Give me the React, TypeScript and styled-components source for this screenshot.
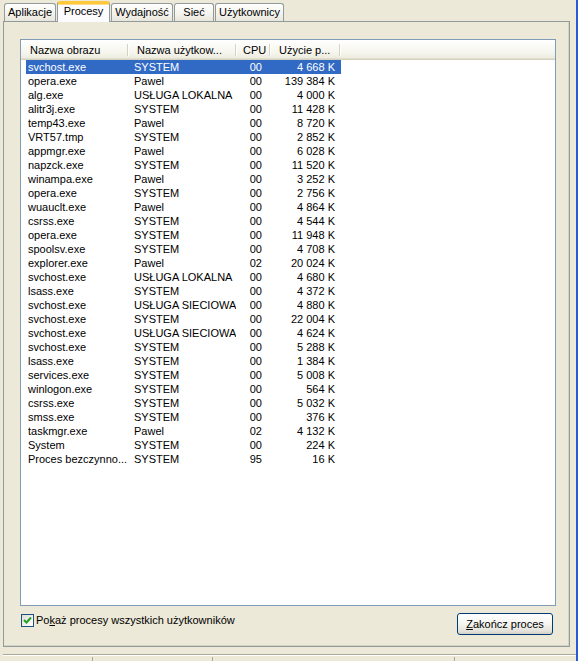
import styled, { createGlobalStyle } from 'styled-components'

const GlobalStyle = createGlobalStyle`
  html, body {
    margin: 0;
    padding: 0;
    background: #ECE9D8;
  }
  body {
    font-family: "Liberation Sans", Arial, sans-serif;
    font-size: 11px;
    color: #000;
  }
`

const Window = styled.div`
  width: 578px;
  height: 661px;
  display: flex;
  background: #ECE9D8;
  overflow: hidden;
`

const Main = styled.div`
  flex: 1;
  display: flex;
  flex-direction: column;
  padding-left: 3px;
`

const Frame = styled.div`
  width: 2px;
  background: #2B5BD4;
`

const TabStrip = styled.div`
  display: flex;
  align-items: flex-end;
  gap: 1px;
  height: 21px;
  padding-left: 1px;
  position: relative;
  z-index: 1;
`

const Tab = styled.div<{ $width: number; $active?: boolean }>`
  box-sizing: border-box;
  width: ${({ $width }) => $width}px;
  height: ${({ $active }) => ($active ? 21 : 18)}px;
  margin-bottom: ${({ $active }) => ($active ? -1 : 0)}px;
  border: 1px solid #919B9C;
  border-bottom: none;
  border-radius: 3px 3px 0 0;
  background: ${({ $active }) =>
    $active ? '#FCFCFE' : 'linear-gradient(#FFFFFF, #F3F2EC 60%, #E8E6DC)'};
  border-top: ${({ $active }) => ($active ? '3px solid #FFC83C' : '1px solid #919B9C')};
  box-shadow: ${({ $active }) => ($active ? 'inset 0 1px 0 #FFDD8A' : 'none')};
  text-align: center;
  line-height: ${({ $active }) => ($active ? 15 : 16)}px;
  white-space: nowrap;
`

const Panel = styled.div`
  box-sizing: border-box;
  width: 567px;
  height: 627px;
  border: 1px solid #919B9C;
  background: #ECE9D8;
  box-shadow: inset -1px -1px 0 #D6D3C6;
  display: flex;
  flex-direction: column;
  padding: 17px 14px 0 16px;
`

const ListView = styled.div`
  box-sizing: border-box;
  width: 536px;
  height: 567px;
  border: 1px solid #7F9DB9;
  background: #FFFFFF;
  overflow: hidden;
`

const Header = styled.div`
  display: flex;
  height: 19px;
  background: linear-gradient(#FFFFFF, #F5F4EC 70%, #EBEADB);
  border-bottom: 1px solid #D6D2C2;
  box-shadow: 0 -1px 0 #E2DECD inset;
`

const HeaderCell = styled.div<{ $width: number; $pad: number }>`
  position: relative;
  box-sizing: border-box;
  width: ${({ $width }) => $width}px;
  padding-left: ${({ $pad }) => $pad}px;
  padding-top: 1px;
  line-height: 18px;
  white-space: nowrap;
  &::after {
    content: '';
    position: absolute;
    right: 0;
    top: 4px;
    bottom: 3px;
    width: 1px;
    background: #D6D2C2;
    box-shadow: 1px 0 0 #FFFFFF;
  }
`

const Rows = styled.div`
  display: flex;
  flex-direction: column;
  padding-left: 5px;
`

const Row = styled.div<{ $selected?: boolean }>`
  display: flex;
  width: 315px;
  height: 14px;
  line-height: 14px;
  background: ${({ $selected }) => ($selected ? '#316AC5' : 'transparent')};
  color: ${({ $selected }) => ($selected ? '#FFFFFF' : '#000000')};
`

const Cell = styled.div<{ $width: number; $right?: boolean; $pad: number }>`
  box-sizing: border-box;
  width: ${({ $width }) => $width}px;
  white-space: nowrap;
  overflow: hidden;
  text-align: ${({ $right }) => ($right ? 'right' : 'left')};
  ${({ $right, $pad }) => ($right ? `padding-right: ${$pad}px;` : `padding-left: ${$pad}px;`)}
`

const BottomRow = styled.div`
  display: flex;
  justify-content: space-between;
  align-items: flex-start;
  margin-top: 7px;
  padding: 0 2px 0 1px;
`

const CheckLabel = styled.label`
  display: flex;
  align-items: center;
  gap: 2px;
  margin-top: 1px;
  line-height: 13px;
`

const CheckBox = styled.span`
  box-sizing: border-box;
  width: 13px;
  height: 13px;
  border: 1px solid #1C5180;
  background: linear-gradient(135deg, #DCDCD7, #FFFFFF);
  display: flex;
  align-items: center;
  justify-content: center;
`

const Button = styled.button`
  box-sizing: border-box;
  width: 96px;
  height: 22px;
  padding: 0;
  border: 1px solid #003C74;
  border-radius: 3px;
  background: linear-gradient(#FFFFFF, #F4F4F0 50%, #E3E2DA 85%, #D6D0C5);
  font-family: "Liberation Sans", Arial, sans-serif;
  font-size: 11px;
  color: #000;
  line-height: 20px;
`

const StatusBar = styled.div`
  display: flex;
  height: 6px;
  margin-top: 7px;
  border-top: 1px solid #ACA899;
  box-shadow: inset 0 1px 0 #FFFFFF;
`

const StatusCell = styled.div<{ $width: number }>`
  width: ${({ $width }) => $width}px;
  border-right: 1px solid #ACA899;
  margin-top: 2px;
`

const tabs = [
  { label: 'Aplikacje', width: 52 },
  { label: 'Procesy', width: 53, active: true },
  { label: 'Wydajność', width: 62 },
  { label: 'Sieć', width: 40 },
  { label: 'Użytkownicy', width: 69 },
]

const columns = [
  { label: 'Nazwa obrazu', width: 107, pad: 9 },
  { label: 'Nazwa użytkow...', width: 108, pad: 9 },
  { label: 'CPU', width: 34, pad: 7 },
  { label: 'Użycie p...', width: 70, pad: 9 },
]

const processes: [string, string, string, string][] = [
  ['svchost.exe', 'SYSTEM', '00', '4 668 K'],
  ['opera.exe', 'Pawel', '00', '139 384 K'],
  ['alg.exe', 'USŁUGA LOKALNA', '00', '4 000 K'],
  ['alitr3j.exe', 'SYSTEM', '00', '11 428 K'],
  ['temp43.exe', 'Pawel', '00', '8 720 K'],
  ['VRT57.tmp', 'SYSTEM', '00', '2 852 K'],
  ['appmgr.exe', 'Pawel', '00', '6 028 K'],
  ['napzck.exe', 'SYSTEM', '00', '11 520 K'],
  ['winampa.exe', 'Pawel', '00', '3 252 K'],
  ['opera.exe', 'SYSTEM', '00', '2 756 K'],
  ['wuauclt.exe', 'Pawel', '00', '4 864 K'],
  ['csrss.exe', 'SYSTEM', '00', '4 544 K'],
  ['opera.exe', 'SYSTEM', '00', '11 948 K'],
  ['spoolsv.exe', 'SYSTEM', '00', '4 708 K'],
  ['explorer.exe', 'Pawel', '02', '20 024 K'],
  ['svchost.exe', 'USŁUGA LOKALNA', '00', '4 680 K'],
  ['lsass.exe', 'SYSTEM', '00', '4 372 K'],
  ['svchost.exe', 'USŁUGA SIECIOWA', '00', '4 880 K'],
  ['svchost.exe', 'SYSTEM', '00', '22 004 K'],
  ['svchost.exe', 'USŁUGA SIECIOWA', '00', '4 624 K'],
  ['svchost.exe', 'SYSTEM', '00', '5 288 K'],
  ['lsass.exe', 'SYSTEM', '00', '1 384 K'],
  ['services.exe', 'SYSTEM', '00', '5 008 K'],
  ['winlogon.exe', 'SYSTEM', '00', '564 K'],
  ['csrss.exe', 'SYSTEM', '00', '5 032 K'],
  ['smss.exe', 'SYSTEM', '00', '376 K'],
  ['taskmgr.exe', 'Pawel', '02', '4 132 K'],
  ['System', 'SYSTEM', '00', '224 K'],
  ['Proces bezczynno...', 'SYSTEM', '95', '16 K'],
]

const App = () => {
  return (
    <Window>
      <GlobalStyle />
      <Main>
        <TabStrip>
          {tabs.map(tab => (
            <Tab key={tab.label} $width={tab.width} $active={tab.active}>
              {tab.label}
            </Tab>
          ))}
        </TabStrip>

        <Panel>
          <ListView>
            <Header>
              {columns.map(col => (
                <HeaderCell key={col.label} $width={col.width} $pad={col.pad}>
                  {col.label}
                </HeaderCell>
              ))}
            </Header>
            <Rows>
              {processes.map(([name, user, cpu, mem], i) => (
                <Row key={i} $selected={i === 0}>
                  <Cell $width={102} $pad={2}>{name}</Cell>
                  <Cell $width={108} $pad={6}>{user}</Cell>
                  <Cell $width={34} $pad={8} $right>{cpu}</Cell>
                  <Cell $width={71} $pad={6} $right>{mem}</Cell>
                </Row>
              ))}
            </Rows>
          </ListView>

          <BottomRow>
            <CheckLabel>
              <CheckBox>
                <svg width="9" height="9" viewBox="0 0 9 9">
                  <polyline points="1,4 3.5,6.5 8,1.5" fill="none" stroke="#21A121" strokeWidth="2" />
                </svg>
              </CheckBox>
              <span>Po<u>k</u>aż procesy wszystkich użytkowników</span>
            </CheckLabel>
            <Button>
              <u>Z</u>akończ proces
            </Button>
          </BottomRow>
        </Panel>

        <StatusBar>
          <StatusCell $width={89} />
          <StatusCell $width={119} />
          <StatusCell $width={241} />
        </StatusBar>
      </Main>
      <Frame />
    </Window>
  )
}

export default App
